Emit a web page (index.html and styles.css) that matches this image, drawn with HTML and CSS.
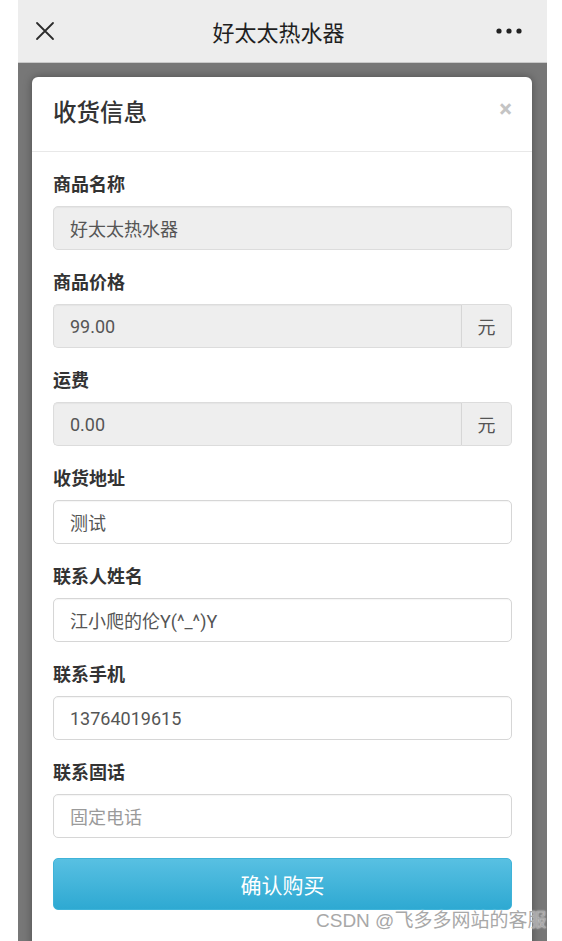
FILE: index.html
```html
<!DOCTYPE html>
<html lang="zh-CN">
<head>
<meta charset="utf-8">
<title>好太太热水器</title>
<link rel="stylesheet" href="styles.css">
</head>
<body>
<div class="phone">
  <header class="topbar">
    <svg class="icon-close" viewBox="0 0 20 20" width="20" height="20"><path d="M2 2L18 18M18 2L2 18" stroke="#2b2b2b" stroke-width="1.8" fill="none" stroke-linecap="round"/></svg>
    <div class="topbar-title">好太太热水器</div>
    <svg class="icon-more" viewBox="0 0 26 6" width="26" height="6"><circle cx="3" cy="3" r="2.6" fill="#222"/><circle cx="13" cy="3" r="2.6" fill="#222"/><circle cx="23" cy="3" r="2.6" fill="#222"/></svg>
  </header>
  <div class="overlay">
    <div class="modal">
      <div class="modal-header">
        <h2 class="modal-title">收货信息</h2>
        <span class="modal-x">×</span>
      </div>
      <form class="modal-body">
        <div class="field">
          <label class="label">商品名称</label>
          <div class="input disabled">好太太热水器</div>
        </div>
        <div class="field">
          <label class="label">商品价格</label>
          <div class="group">
            <div class="input disabled grow">99.00</div>
            <div class="addon">元</div>
          </div>
        </div>
        <div class="field">
          <label class="label">运费</label>
          <div class="group">
            <div class="input disabled grow">0.00</div>
            <div class="addon">元</div>
          </div>
        </div>
        <div class="field">
          <label class="label">收货地址</label>
          <div class="input">测试</div>
        </div>
        <div class="field">
          <label class="label">联系人姓名</label>
          <div class="input">江小爬的伦Y(^_^)Y</div>
        </div>
        <div class="field">
          <label class="label">联系手机</label>
          <div class="input">13764019615</div>
        </div>
        <div class="field">
          <label class="label">联系固话</label>
          <div class="input placeholder">固定电话</div>
        </div>
        <button type="button" class="btn">确认购买</button>
      </form>
    </div>
  </div>
</div>
<div class="watermark">CSDN @飞多多网站的客服</div>
</body>
</html>
```

FILE: styles.css
```css
html, body {
  margin: 0;
  padding: 0;
  background: #ffffff;
  height: 941px;
  overflow: hidden;
  font-family: Roboto, "Noto Sans CJK SC", "Noto Sans", sans-serif;
}

.phone {
  width: 529px;
  margin-left: 18px;
  height: 941px;
  display: flex;
  flex-direction: column;
}

.topbar {
  height: 62px;
  background: #ededed;
  border-bottom: 1px solid #c9c9c9;
  display: flex;
  align-items: center;
  padding: 0 25px 0 17px;
  box-sizing: content-box;
  flex: none;
}

.icon-close {
  flex: none;
}

.topbar-title {
  flex: 1;
  text-align: center;
  font-size: 22px;
  color: #1f1f1f;
  padding-left: 6px;
}

.icon-more {
  flex: none;
}

.overlay {
  flex: 1;
  background: #777777;
  padding: 14px 15px 0 14px;
  overflow: hidden;
}

.modal {
  background: #ffffff;
  border-radius: 6px 6px 0 0;
  box-shadow: 0 0 8px rgba(0, 0, 0, 0.35);
  height: 900px;
}

.modal-header {
  height: 74px;
  border-bottom: 1px solid #e8e8e8;
  display: flex;
  align-items: center;
  justify-content: space-between;
  padding: 0 20px 0 21px;
}

.modal-title {
  margin: -6px 0 0 0;
  font-size: 23.5px;
  font-weight: 500;
  color: #333333;
}

.modal-x {
  font-size: 24px;
  font-weight: 700;
  color: #c4c4c4;
  line-height: 1;
  margin-top: -10px;
}

.modal-body {
  padding: 20px 20px 0 21px;
  margin: 0;
}

.field {
  margin-bottom: 20px;
}

.label {
  display: block;
  font-size: 18px;
  font-weight: 700;
  color: #333333;
  line-height: 26px;
  margin-bottom: 8px;
}

.input {
  height: 44px;
  box-sizing: border-box;
  border: 1px solid #d6d6d6;
  border-radius: 5px;
  padding: 0 16px;
  display: flex;
  align-items: center;
  font-size: 18px;
  color: #555555;
  background: #ffffff;
  box-shadow: inset 0 1px 1px rgba(0, 0, 0, 0.04);
}

.input.disabled {
  background: #eeeeee;
  border-color: #dcdcdc;
}

.input.placeholder {
  color: #9a9a9a;
}

.group {
  display: flex;
}

.grow {
  flex: 1;
  border-top-right-radius: 0;
  border-bottom-right-radius: 0;
}

.addon {
  width: 51px;
  height: 44px;
  box-sizing: border-box;
  border: 1px solid #dcdcdc;
  border-left: 1px solid #d6d6d6;
  border-radius: 0 5px 5px 0;
  background: #eeeeee;
  display: flex;
  align-items: center;
  justify-content: center;
  font-size: 18px;
  color: #555555;
}

.grow + .addon {
  border-left: 1px solid #d6d6d6;
}

.group .grow {
  border-right: none;
}

.btn {
  display: block;
  width: 100%;
  height: 52px;
  border: 1px solid #3fb3d8;
  border-radius: 5px;
  background: linear-gradient(to bottom, #58c0e2, #2ea9d2);
  color: #ffffff;
  font-family: inherit;
  font-size: 21px;
  cursor: pointer;
}

.watermark {
  position: absolute;
  left: 316px;
  top: 907px;
  font-size: 19px;
  line-height: 28px;
  color: #a8a8a8;
  font-family: "Liberation Sans", "Noto Sans CJK SC", sans-serif;
  text-shadow: 0 0 2px #ffffff;
}
```
